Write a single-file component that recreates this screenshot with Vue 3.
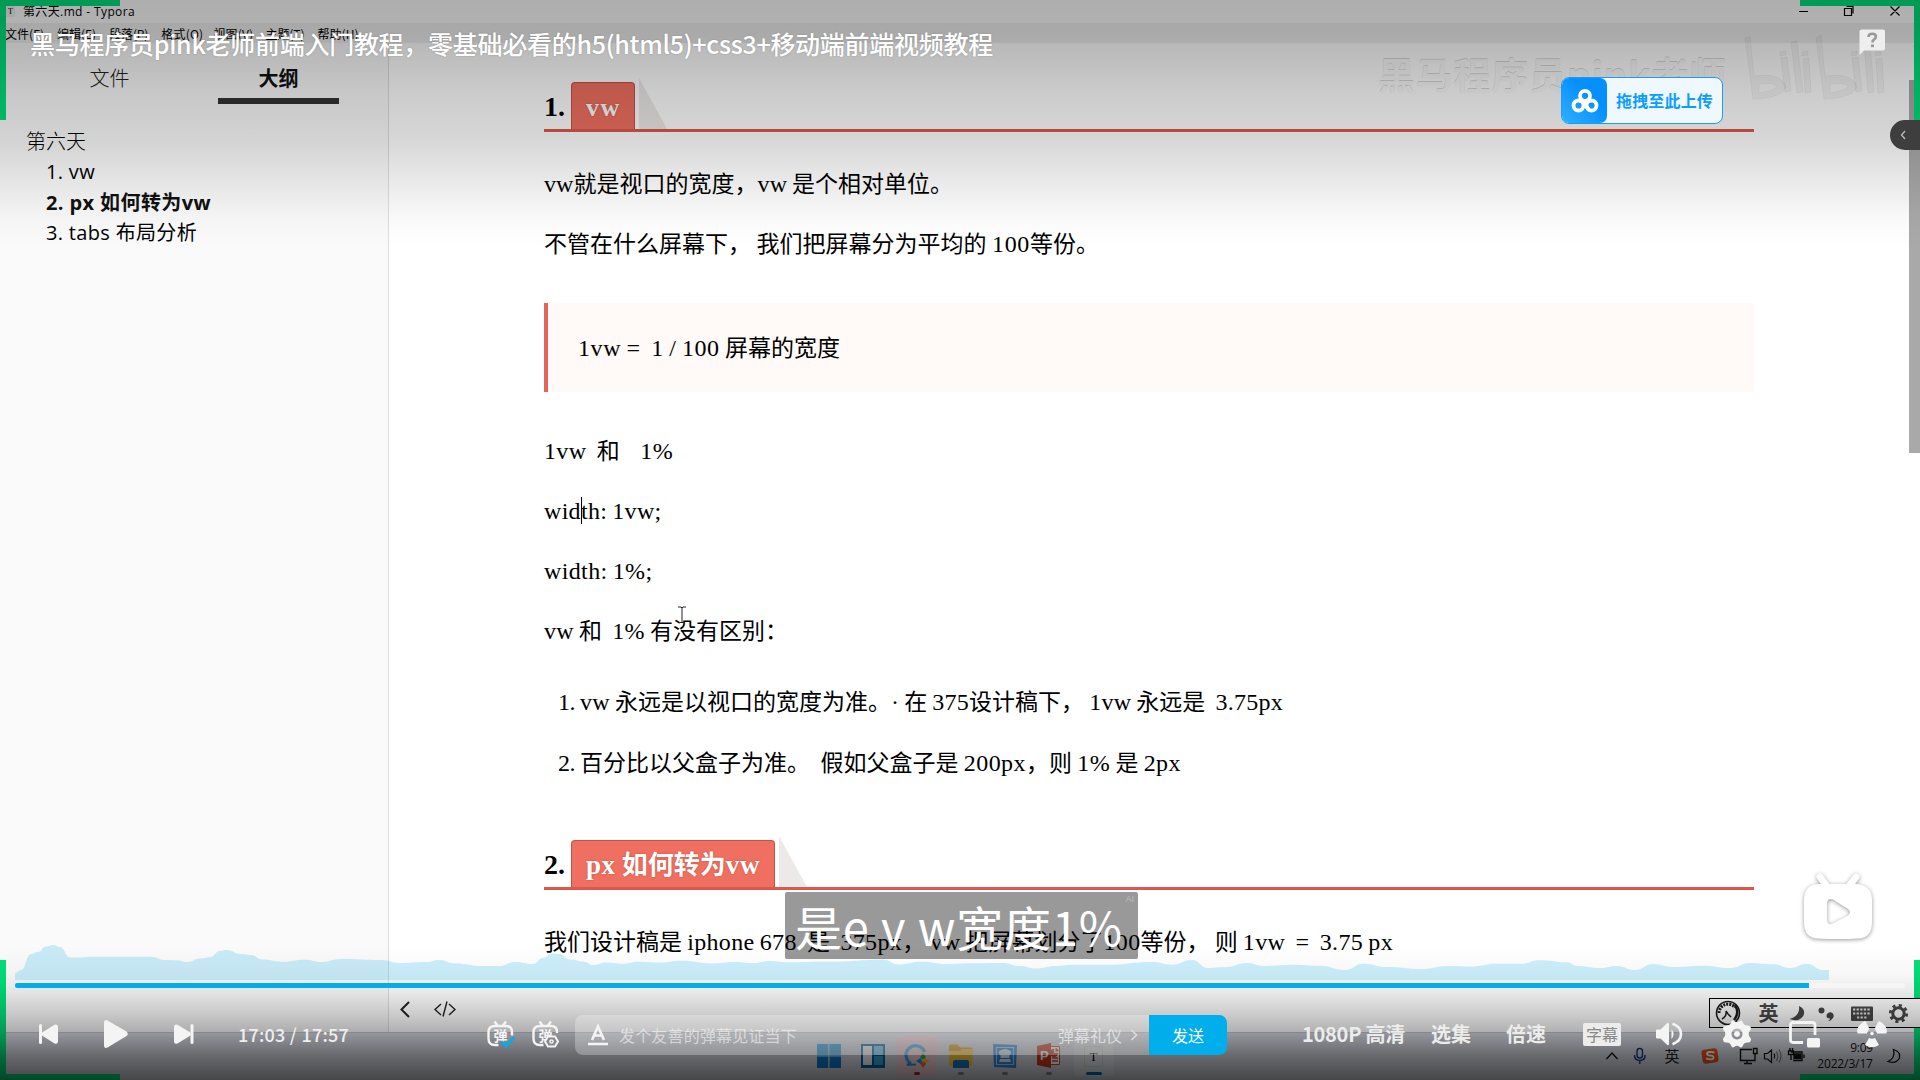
<script setup>
const menus = [
  { t: '文件(F)', w: 39 }, { t: '编辑(E)', w: 39 }, { t: '段落(P)', w: 39 }, { t: '格式(O)', w: 42 },
  { t: '视图(V)', w: 40 }, { t: '主题(T)', w: 39 }, { t: '帮助(H)', w: 41 },
]
const outline = [
  { t: '1. vw', w: 49 }, { t: '2. px 如何转为vw', w: 165, on: true }, { t: '3. tabs 布局分析', w: 151 },
]
const intro = [
  { t: 'vw就是视口的宽度，vw 是个相对单位。', w: 409 },
  { t: '不管在什么屏幕下， 我们把屏幕分为平均的 100等份。', w: 555 },
]
const notes = [
  { t: '1vw  和    1%', w: 129 },
  { t: 'width: 1vw;', w: 117.5, caret: true },
  { t: 'width: 1%;', w: 108.5 },
  { t: 'vw 和  1% 有没有区别：', w: 244 },
]
const items = [
  { t: 'vw 永远是以视口的宽度为准。· 在 375设计稿下， 1vw 永远是  3.75px', w: 703 },
  { t: '百分比以父盒子为准。  假如父盒子是 200px，则 1% 是 2px', w: 601 },
]

const runs = (s) => s.match(/[\x00-\x7f·]+|[^\x00-\x7f·]+/g).map((t) => ({ t, latin: /^[\x00-\x7f·]/.test(t) }))

// Spreads the latin runs of a line (or the whole label) so that it takes the given width.
const vFit = {
  mounted(el, { value }) {
    const parts = [...el.querySelectorAll('.l')]
    const targets = parts.length ? parts : [el]
    const n = targets.reduce((sum, p) => sum + p.textContent.length, 0)
    const range = document.createRange()
    range.selectNodeContents(el)
    const gap = (value - range.getBoundingClientRect().width) / n
    targets.forEach((p) => { p.style.letterSpacing = gap.toFixed(3) + 'px' })
  },
}

const heat = [
  [15, 973], [21, 970], [31, 954], [38, 952], [46, 946.5], [53, 945], [60, 947], [70, 957.5], [79, 957.6], [90, 956.7],
  [120, 956.7], [151, 956.7], [165, 960], [175, 960.3], [188, 962], [200, 958.6], [210, 957.3], [220, 951], [227, 950],
  [241, 954], [251, 955], [262, 959.5], [282, 961.7], [305, 959.7], [322, 962], [341, 959], [382, 960], [399, 963],
  [427, 962], [439, 960], [455, 963.5], [482, 966], [499, 966], [515, 962], [533, 964], [543, 958], [552, 953.5],
  [559, 954], [570, 959.5], [584, 961.7], [593, 965], [606, 962.5], [623, 963.7], [638, 961.7], [660, 962.5],
  [681, 960.7], [713, 963.4], [735, 962], [752, 963], [770, 961], [788, 962.3], [830, 961.5], [884, 959.7], [898, 964.5],
  [921, 961.7], [948, 964], [975, 963.3], [1002, 963], [1020, 966], [1035, 968.5], [1056, 966], [1071, 964.7],
  [1110, 964.7], [1152, 962], [1172, 964.7], [1192, 960], [1208, 968], [1223, 967.3], [1248, 963], [1263, 966],
  [1293, 964.7], [1320, 965.7], [1345, 970], [1363, 963.7], [1387, 967], [1423, 969], [1447, 966], [1470, 966.5],
  [1497, 963.7], [1520, 963.8], [1540, 960.3], [1567, 962.3], [1577, 966], [1600, 968], [1617, 966], [1635, 970],
  [1653, 964], [1673, 967], [1703, 965.7], [1730, 968], [1750, 963], [1773, 964.3], [1790, 968], [1807, 963.7],
  [1823, 970], [1829, 970],
]
let heatPath = 'M15 980L15 973'
for (let i = 1; i < heat.length; i++) {
  const [x0, y0] = heat[i - 1]
  const [x1, y1] = heat[i]
  const m = (x0 + x1) / 2
  heatPath += `C${m} ${y0} ${m} ${y1} ${x1} ${y1}`
}
heatPath += 'V980Z'
</script>

<template>
  <div class="screen">
    <div class="desktop">
      <header class="titlebar">
        <span class="app-icon">T</span>
        <span v-fit="112" class="win-title">第六天.md - Typora</span>
        <svg class="win-btns" width="112" height="22" viewBox="0 0 112 22" fill="none" stroke="#000" stroke-width="1.2">
          <path d="M4 10.500h9M49.500 7.500h7v7h-7zM51.500 5.500h6.500v7M95.500 5.500l9 9M104.500 5.500l-9 9" />
        </svg>
      </header>
      <nav class="menubar">
        <span v-for="m in menus" :key="m.t" class="menu"><span v-fit="m.w">{{ m.t }}</span></span>
      </nav>

      <div class="body">
        <aside class="sidebar">
          <div class="tabs"><span class="tab">文件</span><span class="tab on">大纲</span></div>
          <div class="tree">
            <div class="root">第六天</div>
            <div v-for="o in outline" :key="o.t" class="leaf" :class="{ bold: o.on }"><span v-fit="o.w">{{ o.t }}</span></div>
          </div>
        </aside>

        <main class="doc">
          <article class="article">
            <h2 class="h"><span class="num">1.</span><span class="tag"><span v-fit="35">vw</span></span><i class="fold" /></h2>
            <div class="block first">
              <p v-for="p in intro" :key="p.t"><span v-fit="p.w"><span v-for="(r, i) in runs(p.t)" :key="i" :class="{ l: r.latin }">{{ r.t }}</span></span></p>
            </div>
            <blockquote><span v-fit="262"><span v-for="(r, i) in runs('1vw =  1 / 100 屏幕的宽度')" :key="i" :class="{ l: r.latin }">{{ r.t }}</span></span></blockquote>
            <div class="block second">
              <p v-for="p in notes" :key="p.t"><span v-fit="p.w"><span v-for="(r, i) in runs(p.t)" :key="i" :class="{ l: r.latin }">{{ r.t }}</span></span><i v-if="p.caret" class="caret" /></p>
            </div>
            <ol>
              <li v-for="(p, k) in items" :key="k"><span class="no">{{ k + 1 }}.</span><span v-fit="p.w"><span v-for="(r, i) in runs(p.t)" :key="i" :class="{ l: r.latin }">{{ r.t }}</span></span></li>
            </ol>
            <h2 class="h h-two"><span class="num">2.</span><span class="tag"><span v-fit="174"><span class="l">px </span>如何转为<span class="l">vw</span></span></span><i class="fold" /></h2>
            <p class="last"><span v-fit="849"><span v-for="(r, i) in runs('我们设计稿是 iphone 678  是  375px， vw 把屏幕划分了100等份， 则 1vw  =  3.75 px')" :key="i" :class="{ l: r.latin }">{{ r.t }}</span></span></p>
          </article>
          <footer class="doc-foot">
            <svg width="62" height="20" viewBox="0 0 62 20" fill="none" stroke="#222">
              <path d="M13 3L5.500 10.500L13 18" stroke-width="2" />
              <path d="M45 5l-6 5.500l6 5.500M53 5l6 5.500l-6 5.500M51 2.500l-4 15" stroke-width="1.400" />
            </svg>
          </footer>
          <i class="scroll" />
        </main>
      </div>

      <footer class="taskbar">
        <div class="apps">
          <span class="app"><svg width="24" height="24"><path fill="#0a78c8" d="M0 0h11.300v11.300H0zM12.500 0H24v11.300H12.500zM0 12.500h11.300V24H0zM12.500 12.500H24V24H12.500z" /><path fill="#3fb4ec" opacity=".5" d="M0 0h11.300v11.300H0zM12.500 0H24v11.300H12.500z" /></svg></span>
          <span class="app"><svg width="24" height="24"><path fill="#0a5d9c" d="M0 0h24v24H0z" /><path fill="#f4f6f8" d="M2 2h9v19H2z" /><path fill="#62c8ee" d="M13 2h9v9h-9z" /><path fill="#35a3d8" d="M13 12h9v9h-9z" /></svg></span>
          <span class="app hot"><svg width="26" height="26" fill="none"><path d="M7 20.500A9.500 9.500 0 1 1 20.500 9" stroke="#38a6e8" stroke-width="3.200" /><path d="M7 20l-4 2l9-.5" stroke="#2b93dc" stroke-width="2" /><path fill="#35b24a" d="M19 10l3 4.500-3 2-3-2z" /><path fill="#f7c325" d="M25.500 18l-4.500 3-2-3 2-3z" /><path fill="#f0662c" d="M19 25l-3-4.500 3-2 3 2z" /><path fill="#2a8fe8" d="M12 18l4.500-3 2 3-2 3z" /></svg><b /></span>
          <span class="app"><svg width="26" height="24"><path fill="#d99a12" d="M1 2q0-1.500 1.500-1.500h7l2.500 3h11q1.500 0 1.500 1.500v5H1z" /><path fill="#fbc938" d="M1 7h11l2-2h10.500v15.500q0 1.500-1.500 1.500H2.500Q1 22 1 20.500z" /><path fill="#1272c4" d="M5 24v-6q0-2 2-2h12q2 0 2 2v6z" /></svg><b /></span>
          <span class="app"><svg width="26" height="24"><path fill="#2f86d6" d="M1 0l24 1-1 23-22-1z" /><path fill="none" stroke="#9ed3f8" stroke-width="1.200" d="M4.500 3.500h17v17h-17z" /><path fill="#d9eefc" d="M8.500 11q-2.500-1-1.500-3.500q1-2 3-1.500q3-2 6 0q2-.5 3 1.500q1 2.500-1.500 3.500v3h-9zM8 15h10l1 3H7z" /></svg><b /></span>
          <span class="app"><svg width="24" height="26"><path fill="#fff" stroke="#c84a2c" d="M11 3.500h11.500v18H11z" /><path stroke="#c84a2c" stroke-width="1.500" d="M15 15h6M15 18h6" /><path fill="#c84a2c" d="M17 6v4h4a4 4 0 1 1-4-4zM18.500 5q3 .5 3 3.500h-3z" /><path fill="#c8371c" d="M0 3l14-3v25L0 22z" /><text x="3" y="17" class="ppt">P</text></svg><b /></span>
          <span class="app cur"><span class="ty">T</span><b /></span>
        </div>
        <svg class="tray" width="204" height="24" viewBox="1604 1044 204 24" fill="none" stroke="#111" stroke-width="1.400">
          <path d="M1606.500 1059l5.500-6l5.500 6" />
          <g stroke="#123a8a"><rect x="1637" y="1048.500" width="5.500" height="9.500" rx="2.700" /><path d="M1634.500 1055q0 5.500 5.300 5.500t5.300-5.500M1639.800 1060.500v3.500" /></g>
          <text x="1664.500" y="1061.500" class="ying">英</text>
          <rect x="1702" y="1049" width="16" height="14" rx="3" fill="#e2521b" stroke="none" transform="rotate(-8 1710 1056)" />
          <path d="M1714.500 1052.500q-7-1.500-7.500 1q0 2 3.500 2.200t3 2.500q-1.500 2.200-7.500.2" stroke="#fff" stroke-width="1.800" />
          <path d="M1752 1049.500h-11.500v11h14.500v-5M1744 1063.500h8M1747 1061v2M1753.500 1048.500h3.500v5h-3.500zM1755 1054v4" />
          <path d="M1764.500 1053.500h3l4-3.500v12.500l-4-3.500h-3zM1774 1053.500q1.500 2.500 0 5" stroke-width="1.200" />
          <path d="M1776.500 1051.500q3 4.500 0 9.500M1779 1049.500q4 6.500 0 13" stroke="#666" stroke-width="1" />
          <path d="M1791 1052h11v8.500h-9M1804 1054.500v3.500" /><path d="M1794 1054h6.500v4.500h-6.500z" fill="#111" /><path d="M1788.500 1051h5v3.500h-5zM1790 1048v3M1792.500 1048v3M1791 1055v5" />
        </svg>
        <div class="clock"><span>9:09</span><span v-fit="53">2022/3/17</span></div>
        <svg class="moon" width="16" height="18" fill="none" stroke="#111" stroke-width="1.300"><path d="M6.500 1.500Q14 4 12.500 10Q9 16.500 1 13.500Q8.500 10.500 6.500 1.500z" /></svg>
      </footer>
      <div class="ime">
        <svg width="209" height="28" viewBox="1710 999 209 28" fill="none">
          <circle cx="1728" cy="1013" r="11.500" stroke="#1c1c1c" stroke-width="1.600" /><path d="M1719 1013a9 9 0 0 1 16-5.500" stroke="#1c1c1c" stroke-width="3" stroke-dasharray="2 1" /><path d="M1735 1005q5 8-1 15" stroke="#1c1c1c" stroke-width="2.500" /><path d="M1722 1019q5-3 4-8l2 3l3 3" stroke="#1c1c1c" stroke-width="1.500" />
          <text x="1758.500" y="1021" class="ime-t">英</text>
          <path d="M1799 1006q7 3 4.500 9.500q-4 7-14 3.500q11-3 9.500-13z" fill="#484848" />
          <circle cx="1821.500" cy="1010.500" r="3" fill="#484848" /><path d="M1826.500 1016a3.600 3.600 0 1 1 6 2.500q-1.500 2.500-4.500 2.500q2.500-1.500 2-2.500q-3.500 0-3.500-2.500z" fill="#484848" />
          <rect x="1851" y="1006.500" width="22" height="14.500" rx="1" fill="#484848" /><path d="M1853 1009.500h18M1853 1013.500h18M1857 1017.500h10" stroke="#e4e4e4" stroke-width="2" stroke-dasharray="2.300 1.300" />
          <circle cx="1898.500" cy="1013.500" r="5.700" stroke="#484848" stroke-width="3" /><circle cx="1898.500" cy="1013.500" r="8.200" stroke="#484848" stroke-width="2.800" stroke-dasharray="3.100 3.340" />
        </svg>
      </div>
      <svg class="ibeam" width="8" height="18" fill="none" stroke="#222"><path d="M0 1h3l1 1l1-1h3M4 2v14M1 16.500h6" /></svg>
      <i class="br tl" /><i class="br tr" /><i class="br bl" /><i class="br brr" />
      <div class="brand">
        <span v-fit="349" class="brand-name">黑马程序员pink老师</span>
        <svg class="brand-logo" width="144" height="66" viewBox="0 0 144 66">
          <g><path d="M2 4l5-1l4 39q26-4 32 10q-2 12-33 13zM16 50v9q18-3 18-7q-4-4-18-2z" /><path d="M38 24l6-1l4 34l-6 1zM48 8l6-1l6 51l-6 1zM60 25l6-1l2 34l-6 1zM37 18l6-1v4l-6 1zM59 18l6-1v4l-6 1z" /></g>
          <g transform="translate(71 0)"><path d="M2 4l5-3l4 41q26-4 32 10q-2 12-33 13zM16 50v9q18-3 18-7q-4-4-18-2z" /><path d="M38 24l6-1l4 34l-6 1zM50 9l6-1l4 50l-6 1zM62 25l6-1l2 34l-6 1zM37 18l6-1v4l-6 1zM61 18l6-1v4l-6 1z" /></g>
        </svg>
      </div>
    </div>

    <div class="player">
      <div class="video-title"><span v-fit="963">黑马程序员pink老师前端入门教程，零基础必看的h5(html5)+css3+移动端前端视频教程</span></div>
      <svg class="help" width="27" height="27" viewBox="0 0 27 27"><path d="M3 .5h21q2 0 2 2v17q0 2-2 2H5L.5 26V2.500q0-2 2.500-2z" fill="#eee" /><path d="M9.500 8q0-3.300 3.700-3.300t3.700 3q0 1.700-2 2.900q-1.500 1-1.500 3" fill="none" stroke="#999" stroke-width="2.600" /><path d="M12 15.500h3v2.700h-3z" fill="#999" /></svg>
      <div class="upload">
        <span class="up-ico"><svg width="28" height="26" viewBox="0 0 28 26" fill="none" stroke="#fff" stroke-width="3.800"><circle cx="14" cy="7.800" r="5" /><circle cx="7.500" cy="17.500" r="5" /><circle cx="20.500" cy="17.500" r="5" /><path d="M12.500 14l5 7" /></svg></span>
        <span class="up-t"><span v-fit="97">拖拽至此上传</span></span>
      </div>
      <div class="collapse"><svg width="8" height="12" fill="none" stroke="#bbb" stroke-width="1.300"><path d="M6 2L2.500 6L6 10" /></svg></div>
      <div class="subtitle"><span v-fit="328">是e v w宽度1%</span><i class="ai">AI</i></div>

      <svg class="tv" width="76" height="76" viewBox="0 0 76 76">
        <path d="M20 7l9 12M56 7l-9 12" stroke="#fff" stroke-width="7" stroke-linecap="round" />
        <path fill="#fff" fill-rule="evenodd" d="M20 14h36q16 1 16 16v22q0 16-14 16.500q-20 1-40 0Q4 68 4 52V30Q4 14 20 14zM27 33v17q1 6 6 3.500l15-8q4-3 0-6.500l-15-9.500q-5-2-6 3.500z" />
      </svg>

      <svg class="heat" width="1920" height="40" viewBox="0 940 1920 40"><path :d="heatPath" fill="rgba(0,174,236,.2)" /></svg>
      <div class="bar"><i class="played" /></div>

      <div class="controls">
        <svg width="19" height="20" fill="#f4f4f4"><rect width="3" height="20" rx="1.500" /><path d="M3 8.500L15.500.7Q19-.5 19 3v14q0 3.500-3.500 2.500L3 11.500q-1-1.500 0-3z" /></svg>
        <svg class="g-play" width="24" height="28" fill="#f4f4f4"><path d="M0 3Q0-.8 3.500.4L22.500 11.500Q25 14 22.500 16L3.500 27.500Q0 29 0 25z" /></svg>
        <svg class="g-next" width="20" height="20" fill="#f4f4f4"><rect x="16.500" width="3" height="20" rx="1.500" /><path d="M16.500 8.500L3.500.7Q0-.5 0 3v14q0 3.500 3.500 2.500l13-8q1-1.500 0-3z" /></svg>
        <div class="time"><span v-fit="111">17:03 / 17:57</span></div>
        <svg class="g-dm" width="27" height="28" fill="none" stroke="#f4f4f4" stroke-width="2.400"><path d="M11.500 25H8Q1.500 25 1.500 18.500V12Q1.500 6 8 6h11q6 0 6 6v3.500M7.500 1.500L11 6M19 1.500L15.500 6" /><text x="6.500" y="20.500" class="dm">弹</text><path d="M14.500 21.500l4.500 4.500l8-8.500" stroke="#00aeec" stroke-width="3" /></svg>
        <svg class="g-set" width="27" height="28" fill="none" stroke="#f4f4f4" stroke-width="2.400"><path d="M11.500 25H8Q1.500 25 1.500 18.500V12Q1.500 6 8 6h11q6 0 6 6v1M7.500 1.500L11 6M19 1.500L15.500 6" /><text x="6.500" y="20.500" class="dm">弹</text><path d="M17.500 16.500h7l3 5-3 5h-7l-3-5z" fill="#87888c" stroke-width="2" transform="translate(-1.500 0)" /><circle cx="19.500" cy="21.500" r="1.600" stroke-width="1.500" /></svg>
        <div class="input">
          <svg width="20" height="22" fill="none" stroke="#f4f4f4" stroke-width="2.600"><path d="M4 16L10 2.500L16 16M6 11.500h8M0 20h20" /></svg>
          <span class="ph"><span v-fit="178">发个友善的弹幕见证当下</span></span>
          <span class="manner"><span v-fit="64">弹幕礼仪</span></span>
          <svg class="chev" width="8" height="12" fill="none" stroke="#ddd" stroke-width="1.600"><path d="M1.500 1l5 5l-5 5" /></svg>
        </div>
        <div class="send">发送</div>
        <div class="txt q"><span v-fit="103">1080P 高清</span></div>
        <div class="txt ep">选集</div>
        <div class="txt sp">倍速</div>
        <div class="cc">字幕</div>
        <svg class="g-vol" width="27" height="24" fill="#f4f4f4"><path d="M1 7.500h3.500L11 1.200Q13 0 13 2.500v19q0 2.500-2 1.300L4.500 16.500H1Q0 16.500 0 15.500v-7Q0 7.500 1 7.500z" /><path d="M15.500 7q4 5 0 10z" /><path d="M16.500 1.800q8.500 3 8.500 10.200t-8.500 10.200" fill="none" stroke="#f4f4f4" stroke-width="2.600" /></svg>
        <svg class="g-gear" width="30" height="28" viewBox="0 0 30 28"><path fill="#f4f4f4" fill-rule="evenodd" d="M9.500 1.500Q11-.5 12.500 1.200q2.500 2 5 0Q19-.5 20.500 1.500q1.200 4.200 5 4q3-.3 3.500 2.500q.3 1.500-1.200 2.800q-2.300 3.200 0 6.400q1.500 1.300 1.200 2.800q-.5 2.800-3.500 2.500q-3.800-.2-5 4q-1.500 2-3 .3q-2.500-2-5 0q-1.500 1.700-3-.3q-1.200-4.200-5-4q-3 .3-3.500-2.500q-.3-1.500 1.200-2.800q2.300-3.200 0-6.400Q.7 9.500 1 8q.5-2.800 3.500-2.500q3.800.2 5-4zM15 8.500a5.500 5.500 0 1 0 .01 0zM15 11a3 3 0 1 1-.01 0z" /></svg>
        <svg class="g-pip" width="31" height="27"><path d="M14 21.500H4Q1.500 21.500 1.500 19V4Q1.500 1.500 4 1.500h19.500Q26 1.500 26 4v10" fill="none" stroke="#f4f4f4" stroke-width="2.800" /><rect x="18" y="17" width="13" height="9.500" rx="1.500" fill="#f4f4f4" /></svg>
        <svg class="g-fan" width="30" height="28" fill="#f4f4f4"><circle cx="15" cy="13.500" r="1.800" /><path d="M8.500 1L12.500 9Q10.500 10.500 10 13.500H1Q-.5 12 .3 9.500Q2.500 3 8.500 1zM21.500 1L17.500 9Q19.500 10.500 20 13.500h9Q30.500 12 29.700 9.500Q27.500 3 21.500 1zM12 18q3 1.500 6 0l4 7q-7 4.500-14 0z" /></svg>
      </div>
    </div>
  </div>
</template>

<style>
body { margin: 0; overflow: hidden; }
</style>

<style scoped>
.screen { position: relative; width: 1920px; height: 1080px; overflow: hidden; background: #fff; font-family: "Open Sans", "Noto Sans CJK SC", sans-serif; color: #000; white-space: pre; text-spacing-trim: space-all; }
svg { display: block; flex: none; overflow: visible; }
i { font-style: normal; }
.desktop { display: flex; flex-direction: column; height: 1080px; }
.titlebar { display: flex; align-items: center; height: 23px; background: #fcfcfc; font-size: 12px; line-height: 23px; }
.app-icon { width: 9px; height: 11px; margin-left: 6px; font: 8px/11px "Liberation Serif", serif; text-align: center; background: rgba(0,0,0,.05); }
.win-title { margin-left: 8px; }
.win-btns { margin-left: auto; margin-right: 13px; }
.menubar { display: flex; height: 20px; padding-left: 5px; background: #efefef; font: 12px/21px "Noto Sans CJK SC", sans-serif; }
.menu { width: 52.100px; }
.body { display: flex; flex: 1; min-height: 0; }
.sidebar { width: 388px; background: #fafafa; border-right: 1px solid #ddd; font-size: 20px; }
.tabs { display: flex; gap: 49px; padding-left: 49px; height: 61px; }
.tab { width: 121px; height: 55px; line-height: 69px; text-align: center; font-family: "Noto Sans CJK SC", sans-serif; font-weight: 300; color: #222; }
.tab.on { margin-left: -1px; font-weight: 700; color: #111; border-bottom: 6px solid #333; }
.tree { padding-top: 21px; line-height: 31px; }
.root { padding-left: 26px; height: 31px; font-weight: 300; font-family: "Noto Sans CJK SC", sans-serif; line-height: 31px; }
.leaf { padding-left: 46px; height: 30.700px; }
.bold { font-weight: 700; color: #111; }
.doc { position: relative; display: flex; flex-direction: column; flex: 1; background: #fff; }
.article { width: 1210px; padding: 35px 0 0 155px; font: 23px/60px "Liberation Serif", "Noto Sans CJK SC", serif; }
.l { font-size: 24px; line-height: 1; word-spacing: -1.2px; }
.h { display: flex; align-items: flex-end; box-sizing: border-box; height: 54px; margin: 0; border-bottom: 3px solid #dc574c; font-size: 26px; line-height: 47px; position: relative; }
.num { width: 27px; line-height: 45px; font-size: 28px; }
.tag { height: 47px; padding: 0 15px; color: #fff; background: #ef7060; border: 1px solid #c75049; border-bottom: 0; border-radius: 4px 4px 0 0; box-sizing: border-box; line-height: 49px; text-shadow: 0 0 2px rgba(120,30,20,.4); }
.h:not(.h-two) .tag { width: 64px; padding: 0 14px; }
.h-two .tag { width: 204px; padding: 0 14px; }
.h-two .l { font-size: 27px; }
.fold { width: 28px; height: 51px; margin-left: 4px; background: #ede9e9; clip-path: polygon(0 0, 100% 100%, 0 100%); }
.block p, .last { margin: 0; height: 60px; position: relative; }
.first { padding: 23px 0 28px; }
blockquote { box-sizing: border-box; height: 89px; margin: 0; padding-left: 30px; line-height: 91px; background: #fff9f7; border-left: 4px solid #e2675a; }
.second { padding-top: 30px; }
.caret { position: absolute; left: 37px; top: 15px; width: 1px; height: 27px; background: #000; }
ol { list-style: none; margin: 11px 0 0; padding: 0 0 0 14px; }
li { display: flex; height: 61px; }
.no { width: 22px; font-size: 24px; line-height: 59px; letter-spacing: -.5px; }
.h-two { margin-top: 41px; }
.last { margin-top: 23px; }
.doc-foot { position: absolute; left: 7px; top: 956px; }
.scroll { position: absolute; right: 0; top: 37px; width: 11px; height: 373px; background: #a9a9a9; }
.taskbar { display: flex; height: 47px; border-top: 1px solid #c3c5cc; background: #d8dae2; }
.apps { display: flex; gap: 4.100px; margin-left: 809px; padding-top: 3px; }
.app { position: relative; display: flex; align-items: center; justify-content: center; width: 40px; height: 40px; border-radius: 4px; }
.app.hot { background: #f0cdd3; }
.app.cur { background: #e2e4ea; }
.app b { position: absolute; left: 17px; bottom: 1px; width: 6px; height: 3px; border-radius: 2px; background: #888; }
.app.hot b { background: #c02020; }
.app.cur b { left: 12px; width: 16px; background: #0067c0; }
.ppt { font: bold 13px "Liberation Sans", sans-serif; fill: #fff; }
.ty { width: 17px; height: 19px; border: 1px solid #d4d4d4; background: #e4e5e8; font: 13px/19px "Liberation Serif", serif; text-align: center; }
.tray { margin: 11px 0 0 490.300px; }
.ying { font: 15px "Noto Sans CJK SC", sans-serif; fill: #222; stroke: none; }
.clock { display: flex; flex-direction: column; align-items: flex-end; width: 65px; padding-top: 7px; font-size: 12px; line-height: 16px; color: #111; letter-spacing: -.3px; }
.moon { margin: 15px 0 0 14px; }
.ime { position: absolute; left: 1709px; top: 998px; width: 211px; height: 28px; border: 1px solid #000; border-right: 0; background: #fff; z-index: 2; }
.ime-t { font: bold 20px "Noto Sans CJK SC", sans-serif; fill: #484848; }
.ibeam { position: absolute; left: 678px; top: 606px; }
.br { position: absolute; width: 120px; height: 120px; box-sizing: border-box; border: 0 solid #00df7a; }
.tl { left: 0; top: 0; border-left-width: 6px; border-top-width: 6px; }
.tr { right: 0; top: 0; border-right-width: 6px; border-top-width: 6px; }
.bl { left: 0; bottom: 0; border-left-width: 6px; border-bottom-width: 6px; }
.brr { right: 0; bottom: 0; border-right-width: 6px; border-bottom-width: 6px; }
.brand { position: absolute; left: 1378px; top: 34px; display: flex; }
.brand-name { width: 365px; font: 700 37px/80px "Noto Sans CJK SC", sans-serif; color: #fbfbfb; text-shadow: 0 -1px 0 rgba(0,0,0,.16), -1px 0 0 rgba(0,0,0,.05); }
.brand-logo { fill: rgba(0,0,0,.035); stroke: rgba(0,0,0,.06); stroke-width: .8; }

.player { position: absolute; inset: 0; z-index: 3; background:
  linear-gradient(180deg, rgba(0,0,0,.31) 0, rgba(0,0,0,.29) 35px, rgba(0,0,0,.2) 95px, rgba(0,0,0,.155) 140px, rgba(0,0,0,.08) 185px, rgba(0,0,0,.02) 220px, transparent 250px),
  linear-gradient(180deg, transparent 945px, rgba(0,0,0,.03) 975px, rgba(0,0,0,.09) 993px, rgba(0,0,0,.2) 1014px, rgba(0,0,0,.32) 1034px, rgba(0,0,0,.52) 1056px, rgba(0,0,0,.68) 1080px); }
.video-title { position: absolute; left: 30px; top: 23px; font: 500 25px/40px "Noto Sans CJK SC", sans-serif; color: #fff; text-shadow: 0 0 2px rgba(0,0,0,.2); }
.help { position: absolute; left: 1859px; top: 29px; }
.upload { position: absolute; left: 1561px; top: 77px; display: flex; box-sizing: border-box; width: 162px; height: 47px; border: 1px solid #1b9bf8; border-radius: 8px; background: #f0f8ff; overflow: hidden; }
.up-ico { display: flex; align-items: center; justify-content: center; width: 45px; border-radius: 0 7px 7px 0; background: linear-gradient(45deg, #2fb0ff, #0690ff 60%); }
.up-t { margin-left: 9px; font: 700 16px/44px "Noto Sans CJK SC", sans-serif; color: #0c9dfd; }
.collapse { position: absolute; right: 0; top: 120px; display: flex; align-items: center; box-sizing: border-box; width: 30px; height: 30px; padding-left: 9px; border-radius: 15px 0 0 15px; background: #3e3e3e; }
.subtitle { position: absolute; left: 785px; top: 892px; box-sizing: border-box; width: 353px; height: 67px; padding-left: 10px; border-radius: 2px; background: rgba(0,0,0,.4); color: #fff; font: 400 47px/67px "Noto Sans CJK SC", sans-serif; }
.ai { position: absolute; right: 4px; top: 2px; font: 9px/11px "Liberation Sans", sans-serif; color: #bbb; }
.tv { position: absolute; left: 1800px; top: 870px; filter: drop-shadow(0 1px 2px rgba(0,0,0,.4)); }
.heat { position: absolute; left: 0; top: 940px; }
.bar { position: absolute; left: 15px; top: 983px; width: 1890px; height: 5px; border-radius: 2px; background: rgba(255,255,255,.4); overflow: hidden; }
.played { display: block; width: 1794px; height: 5px; background: #00aeec; }
.controls { position: absolute; left: 0; right: 0; top: 1014px; display: flex; align-items: center; height: 40px; padding-left: 39px; font-family: "Noto Sans CJK SC", sans-serif; color: #f0f0f0; }
.g-play { margin-left: 46px; }
.g-next { margin-left: 46px; }
.time { width: 111px; margin-left: 44px; font: 500 18px/38px "Noto Sans CJK SC", sans-serif; color: #eee; }
.g-dm { margin-left: 138px; }
.g-set { margin-left: 18px; }
.dm { font: 700 14px "Noto Sans CJK SC", sans-serif; fill: #f4f4f4; stroke: none; }
.input { display: flex; align-items: center; box-sizing: border-box; width: 574px; height: 40px; margin: 2px 0 0 16px; padding-left: 13px; border-radius: 8px 0 0 8px; background: rgba(255,255,255,.27); }
.ph { width: 439px; margin-left: 11px; font-size: 16px; line-height: 40px; color: rgba(255,255,255,.55); }
.manner { width: 64px; font-size: 16px; line-height: 40px; color: rgba(255,255,255,.6); }
.chev { margin-left: 8px; }
.send { width: 78px; height: 40px; margin-top: 2px; border-radius: 0 8px 8px 0; background: #00aeec; color: #fff; font-size: 16px; line-height: 40px; text-align: center; }
.txt { font-size: 20px; font-weight: 700; line-height: 38px; width: 40px; color: #ececec; }
.q { width: 103px; margin-left: 75px; }
.ep { margin-left: 26px; }
.sp { margin-left: 35px; }
.cc { width: 38px; height: 23px; margin-left: 37px; border-radius: 2px; background: #ececec; color: #888; font-size: 16px; line-height: 22px; text-align: center; }
.g-vol { margin-left: 35px; }
.g-gear { margin-left: 39px; }
.g-pip { margin-left: 37px; }
.g-fan { margin-left: 37px; }
</style>
